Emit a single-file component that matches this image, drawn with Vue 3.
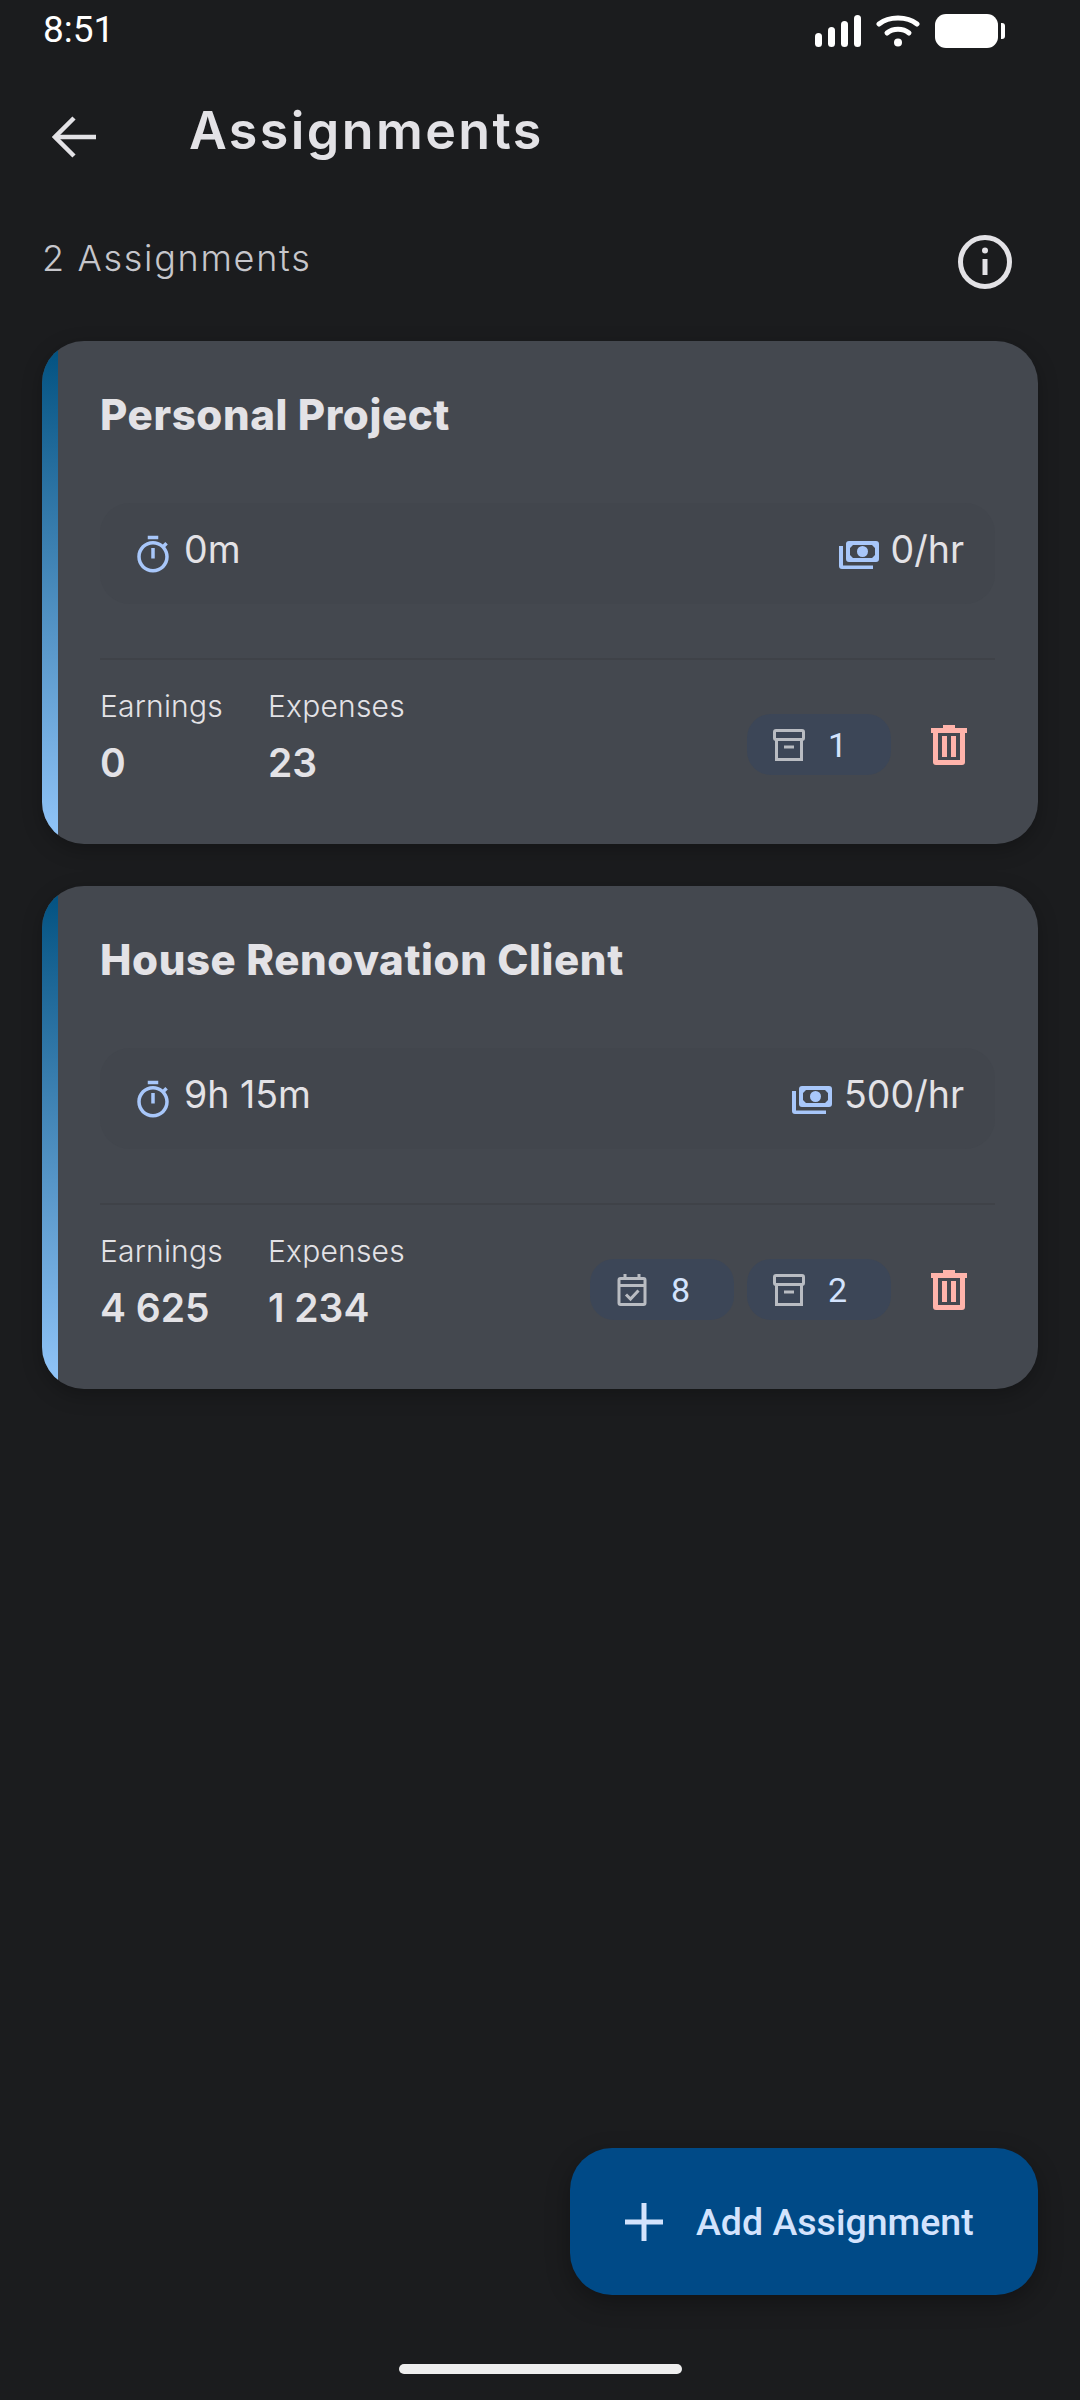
<script setup>
const assignments = [
  { name: 'Personal Project', time: '0m', rate: '0/hr', earnings: '0', expenses: '23', tasks: null, archived: 1 },
  { name: 'House Renovation Client', time: '9h 15m', rate: '500/hr', earnings: '4 625', expenses: '1 234', tasks: 8, archived: 2 }
];
</script>

<template>
  <div class="screen">
    <div class="status">
      <span class="clock">8:51</span>
      <div class="status-icons">
        <svg width="46" height="32" viewBox="0 0 46 32" fill="#fff">
          <rect x="0" y="18" width="7" height="14" rx="3.5" />
          <rect x="13" y="12" width="7" height="20" rx="3.5" />
          <rect x="26" y="6" width="7" height="26" rx="3.5" />
          <rect x="39" y="0" width="7" height="32" rx="3.5" />
        </svg>
        <svg class="wifi" width="44" height="32" viewBox="0 0 44 32" fill="none" stroke="#fff" stroke-width="5" stroke-linecap="round">
          <path d="M3 9C13 1 31 1 41 9" />
          <path d="M11 18C17 13 27 13 33 18" />
          <circle cx="22" cy="27.5" r="4" fill="#fff" stroke="none" />
        </svg>
        <div class="battery"></div>
        <div class="battery-nib"></div>
      </div>
    </div>

    <header class="topbar">
      <svg class="back" width="44" height="42" viewBox="0 0 44 42" fill="none" stroke="#e3e2e6" stroke-width="4.5">
        <path d="M44 21H4" />
        <path d="M22 2L3 21L22 40" />
      </svg>
      <h1>Assignments</h1>
    </header>

    <div class="meta">
      <span>2 Assignments</span>
      <svg class="info" width="60" height="60" viewBox="0 0 60 60" fill="none" stroke="#e3e2e6" stroke-width="5">
        <circle cx="30" cy="30" r="24.5" />
        <path d="M30 27V43" />
        <circle cx="30" cy="18.5" r="3" fill="#e3e2e6" stroke="none" />
      </svg>
    </div>

    <div class="list">
      <section v-for="item in assignments" :key="item.name" class="card">
        <div class="strip"></div>
        <div class="body">
          <h2>{{ item.name }}</h2>
          <div class="summary">
            <div class="summary-item">
              <svg width="42" height="42" viewBox="0 0 24 24" fill="#a8c7fa">
                <path d="M15 1H9v2h6V1zm-4 13h2V8h-2v6zm8.03-6.61l1.42-1.42c-.43-.51-.9-.99-1.41-1.41l-1.42 1.42C16.07 4.74 14.12 4 12 4c-4.97 0-9 4.03-9 9s4.02 9 9 9 9-4.03 9-9c0-2.12-.74-4.07-1.97-5.61zM12 20c-3.87 0-7-3.13-7-7s3.13-7 7-7 7 3.13 7 7-3.13 7-7 7z" />
              </svg>
              <span>{{ item.time }}</span>
            </div>
            <div class="summary-item rate">
              <svg width="40" height="28" viewBox="0 0 40 28" fill="#a8c7fa">
                <path fill-rule="evenodd" d="M10 0H37Q40 0 40 3V18Q40 21 37 21H10Q7 21 7 18V3Q7 0 10 0ZM14 4L11 7V14L14 17H33L36 14V7L33 4Z" />
                <circle cx="23.5" cy="10.5" r="5.5" />
                <path d="M0 5H4V24.5H34V28H3Q0 28 0 25Z" />
              </svg>
              <span>{{ item.rate }}</span>
            </div>
          </div>
          <div class="divider"></div>
          <div class="footer">
            <div class="stat">
              <span class="stat-label">Earnings</span>
              <span class="stat-value">{{ item.earnings }}</span>
            </div>
            <div class="stat">
              <span class="stat-label">Expenses</span>
              <span class="stat-value">{{ item.expenses }}</span>
            </div>
            <div class="actions">
              <div v-if="item.tasks" class="chip">
                <svg width="32" height="32" viewBox="0 0 32 32" fill="none" stroke="#b9bcc2" stroke-width="3">
                  <rect x="3" y="4.5" width="26" height="26" rx="1.5" />
                  <path d="M3 11.5H29M9 0V5M23 0V5" />
                  <path d="M10 20.5L14.5 25L22.5 16.5" />
                </svg>
                <span>{{ item.tasks }}</span>
              </div>
              <div class="chip">
                <svg width="32" height="32" viewBox="0 0 32 32" fill="none" stroke="#b9bcc2" stroke-width="3">
                  <rect x="1.5" y="1.5" width="29" height="9" rx="1.5" />
                  <path d="M3.5 10.5V30.5H28.5V10.5" />
                  <path d="M11 18H21" />
                </svg>
                <span>{{ item.archived }}</span>
              </div>
              <svg class="trash" width="36" height="40" viewBox="0 0 36 40" fill="#ffb4ab">
                <path fill-rule="evenodd" d="M12 0H24V3H36V8H34V37Q34 40 31 40H5Q2 40 2 37V8H0V3H12ZM7 8V35H29V8Z" />
                <rect x="11" y="11" width="5" height="21" />
                <rect x="20" y="11" width="5" height="21" />
              </svg>
            </div>
          </div>
        </div>
      </section>
    </div>

    <button class="fab">
      <svg width="38" height="38" viewBox="0 0 38 38" stroke="#d3e3fd" stroke-width="5">
        <path d="M19 0V38M0 19H38" />
      </svg>
      <span>Add Assignment</span>
    </button>

    <div class="home-bar"></div>
  </div>
</template>

<style>
html, body {
  margin: 0;
  background: #1b1c1e;
}
</style>

<style scoped>
.screen {
  position: relative;
  width: 1080px;
  height: 2400px;
  overflow: hidden;
  background: #1b1c1e;
  color: #e3e2e6;
  font-family: Inter, "Noto Sans", sans-serif;
}

.status {
  height: 62px;
  padding: 0 75px 0 43px;
  display: flex;
  justify-content: space-between;
  align-items: flex-start;
}
.clock {
  font-family: Roboto, sans-serif;
  font-size: 37px;
  line-height: 60px;
  color: #fff;
}
.status-icons {
  display: flex;
  align-items: center;
  padding-top: 14px;
  height: 34px;
}
.wifi {
  margin-left: 15px;
}
.battery {
  width: 63px;
  height: 34px;
  margin-left: 15px;
  border-radius: 11px;
  background: #fff;
}
.battery-nib {
  width: 4px;
  height: 16px;
  margin-left: 3px;
  border-radius: 0 3px 3px 0;
  background: #fff;
}

.topbar {
  display: flex;
  align-items: center;
  height: 64px;
  margin-top: 37px;
  padding-left: 52px;
}
.back {
  margin-top: 12px;
}
.topbar h1 {
  margin: 0 0 0 93px;
  font-size: 52px;
  line-height: 64px;
  font-weight: 600;
  letter-spacing: 2.4px;
}

.meta {
  display: flex;
  justify-content: space-between;
  align-items: center;
  height: 50px;
  margin: 70px 0 58px;
  padding: 0 65px 0 42px;
  font-size: 36px;
  font-weight: 300;
  letter-spacing: 1.7px;
  color: #c6c6cb;
}
.info {
  margin-top: 8px;
}

.list {
  display: flex;
  flex-direction: column;
  gap: 42px;
  padding: 0 42px;
}
.card {
  display: flex;
  height: 503px;
  border-radius: 42px;
  overflow: hidden;
  background: #44484f;
  box-shadow: 0 6px 20px rgba(0, 0, 0, 0.25);
}
.strip {
  flex: none;
  width: 16px;
  background: linear-gradient(180deg, #00507f 0%, #93c6fa 100%);
}
.body {
  flex: 1;
  padding: 44px 43px 0 42px;
}
.body h2 {
  margin: 0;
  font-size: 42px;
  line-height: 60px;
  font-weight: 800;
  letter-spacing: 0.6px;
}

.summary {
  display: flex;
  justify-content: space-between;
  align-items: center;
  height: 101px;
  margin-top: 58px;
  padding: 0 31px 0 32px;
  border-radius: 30px;
  background: #42464d;
}
.summary-item {
  display: flex;
  align-items: center;
  gap: 10px;
  font-size: 37.5px;
  margin-top: 2px;
}
.summary-item span {
  padding-bottom: 10px;
}
.rate {
  gap: 12px;
}

.divider {
  height: 2px;
  margin-top: 54px;
  background: #3f4248;
}

.footer {
  display: flex;
  margin-top: 26px;
}
.stat {
  display: flex;
  flex-direction: column;
  width: 168px;
}
.stat-label {
  font-size: 30px;
  line-height: 40px;
  font-weight: 300;
  letter-spacing: 0.2px;
}
.stat-value {
  margin-top: 11px;
  font-size: 39px;
  line-height: 52px;
  font-weight: 600;
}

.actions {
  display: flex;
  align-items: center;
  gap: 13px;
  height: 61px;
  margin: 28px 28px 0 auto;
}
.chip {
  box-sizing: border-box;
  display: flex;
  align-items: center;
  gap: 23px;
  width: 144px;
  height: 61px;
  padding-left: 26px;
  border-radius: 24px;
  background: #3c4657;
  color: #d3e3fd;
  font-family: Roboto, sans-serif;
  font-size: 34px;
  font-weight: 400;
}
.trash {
  margin-left: 27px;
}

.fab {
  position: absolute;
  right: 42px;
  bottom: 105px;
  display: flex;
  align-items: center;
  gap: 33px;
  box-sizing: border-box;
  width: 468px;
  height: 147px;
  padding: 0 0 0 55px;
  border: none;
  border-radius: 42px;
  background: #004a87;
  color: #d3e3fd;
  font-family: Roboto, sans-serif;
  font-size: 37.5px;
  font-weight: 500;
  box-shadow: 0 8px 24px rgba(0, 0, 0, 0.3);
}

.home-bar {
  position: absolute;
  left: 399px;
  bottom: 26px;
  width: 283px;
  height: 10px;
  border-radius: 5px;
  background: #eee;
}
</style>
